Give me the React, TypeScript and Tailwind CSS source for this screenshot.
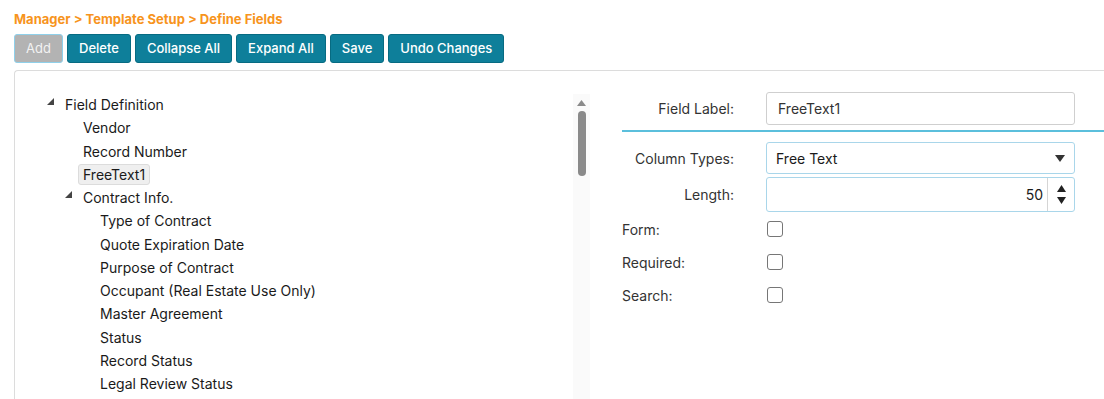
import React from "react";

type Node = { label: string; level: number; expanded?: boolean; selected?: boolean };

const tree: Node[] = [
  { label: "Field Definition", level: 0, expanded: true },
  { label: "Vendor", level: 1 },
  { label: "Record Number", level: 1 },
  { label: "FreeText1", level: 1, selected: true },
  { label: "Contract Info.", level: 1, expanded: true },
  { label: "Type of Contract", level: 2 },
  { label: "Quote Expiration Date", level: 2 },
  { label: "Purpose of Contract", level: 2 },
  { label: "Occupant (Real Estate Use Only)", level: 2 },
  { label: "Master Agreement", level: 2 },
  { label: "Status", level: 2 },
  { label: "Record Status", level: 2 },
  { label: "Legal Review Status", level: 2 },
];

const buttons = ["Delete", "Collapse All", "Expand All", "Save", "Undo Changes"];

function Triangle() {
  return (
    <svg width="7" height="7" viewBox="0 0 7 7" className="mb-[6px]">
      <polygon points="7,0 7,7 0,7" fill="#444" />
    </svg>
  );
}

function TreeRow({ node }: { node: Node }) {
  const pad = node.level === 0 ? "pl-[32px]" : node.level === 1 ? "pl-[50px]" : "pl-[85px]";
  return (
    <div className={`flex h-[23.25px] items-center ${pad}`}>
      {node.expanded !== undefined ? (
        <span className="flex w-[18px] items-end">
          <Triangle />
        </span>
      ) : node.level === 1 ? (
        <span className="w-[18px]" />
      ) : null}
      <span
        className={
          node.selected
            ? "-ml-[5px] rounded-[3px] border border-[#dcdcdc] bg-[#efefef] px-[4px] leading-[19px]"
            : ""
        }
      >
        {node.label}
      </span>
    </div>
  );
}

function Checkbox() {
  return <span className="block h-[16px] w-[16px] rounded-[3px] border border-[#767676] bg-white" />;
}

export default function App() {
  return (
    <div
      className="h-[399px] w-[1104px] overflow-hidden bg-white text-[#1a1a1a]"
      style={{ fontFamily: "Inter, 'Noto Sans', sans-serif" }}
    >
      <div className="pl-[14px] pt-[11px]">
        <div className="text-[13px] font-bold leading-[16px] text-[#f7941d]">
          Manager &gt; Template Setup &gt; Define Fields
        </div>
        <div className="mt-[7px] flex gap-[4px]">
          <button className="h-[29px] w-[49px] rounded-[3px] border border-[#8fd0ea] bg-[#b3b3b3] text-[13px] text-[#f2f2f2]">
            Add
          </button>
          {buttons.map((b) => (
            <button
              key={b}
              className="h-[29px] rounded-[3px] border border-[#076b82] bg-[#0e7f9a] px-[11px] text-[13px] font-medium text-white"
            >
              {b}
            </button>
          ))}
        </div>
        <div className="mt-[7px] flex h-[400px] rounded-tl-[4px] border-l border-t border-[#dcdcdc]">
          <div className="flex w-[575px] shrink-0">
            <div className="flex-1 pt-[22px] text-[14px]">
              {tree.map((n) => (
                <TreeRow key={n.label} node={n} />
              ))}
            </div>
            <div className="mt-[23px] flex w-[17px] flex-col items-center bg-[#fafafa]">
              <svg width="9" height="6" viewBox="0 0 9 6" className="mt-[6px]">
                <polygon points="4.5,0 9,6 0,6" fill="#8a8a8a" />
              </svg>
              <div className="mt-[5px] h-[65px] w-[8px] rounded-full bg-[#8a8a8a]" />
            </div>
          </div>
          <div className="min-w-0 flex-1 pl-[32px] pt-[21px] text-[14px] text-[#333]">
            <div className="flex items-center">
              <span className="w-[112px] shrink-0 text-right">Field Label:</span>
              <div className="ml-[32px] flex h-[33px] w-[309px] shrink-0 items-center rounded-[3px] border border-[#cfcfcf] px-[11px]">
                FreeText1
              </div>
            </div>
            <div className="mt-[5px] h-[2px] w-[600px] bg-[#5bbfdc]" />
            <div className="mt-[10px] flex items-center">
              <span className="w-[112px] shrink-0 text-right">Column Types:</span>
              <div className="ml-[32px] flex h-[32px] w-[309px] shrink-0 items-center justify-between rounded-[3px] border border-[#a9d6ea] px-[9px] text-[#1a1a1a]">
                <span>Free Text</span>
                <svg width="10" height="7" viewBox="0 0 10 7">
                  <polygon points="0,0 10,0 5,7" fill="#333" />
                </svg>
              </div>
            </div>
            <div className="mt-[3px] flex items-center">
              <span className="w-[112px] shrink-0 text-right">Length:</span>
              <div className="ml-[32px] flex h-[35px] w-[309px] shrink-0 items-center rounded-[3px] border border-[#a9d6ea]">
                <span className="flex-1 pr-[4px] text-right text-[#1a1a1a]">50</span>
                <div className="flex h-full w-[27px] flex-col items-center justify-center gap-[5px] border-l border-[#d5d5d5]">
                  <svg width="9" height="7" viewBox="0 0 9 7">
                    <polygon points="4.5,0 9,7 0,7" fill="#222" />
                  </svg>
                  <svg width="9" height="7" viewBox="0 0 9 7">
                    <polygon points="0,0 9,0 4.5,7" fill="#222" />
                  </svg>
                </div>
              </div>
            </div>
            <div className="mt-[9px] flex flex-col gap-[17px]">
              {["Form:", "Required:", "Search:"].map((l) => (
                <div key={l} className="flex h-[16px] items-center">
                  <span className="w-[145px] shrink-0">{l}</span>
                  <Checkbox />
                </div>
              ))}
            </div>
          </div>
        </div>
      </div>
    </div>
  );
}
